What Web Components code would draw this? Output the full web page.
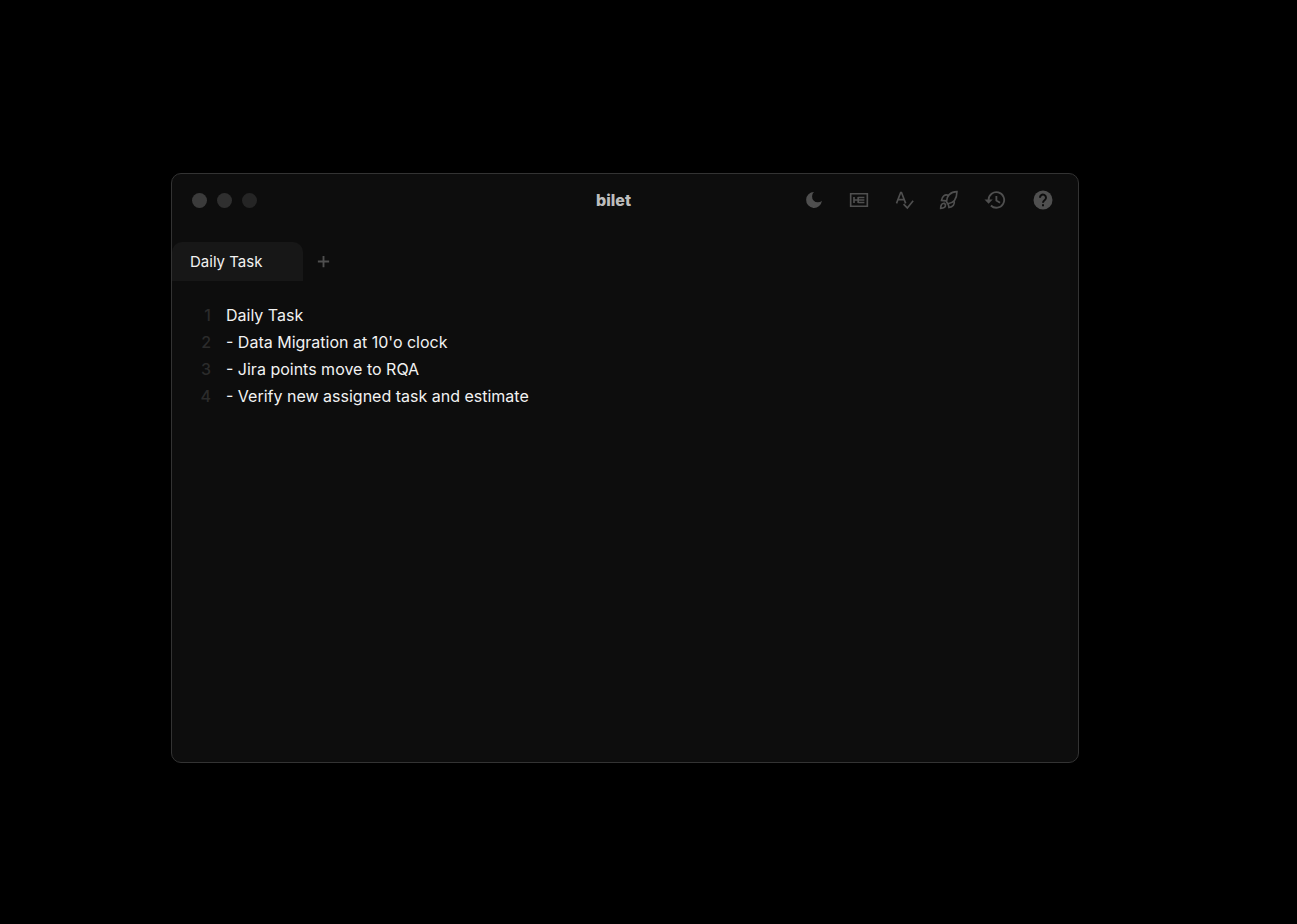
<!DOCTYPE html>
<html lang="en">
<head>
<meta charset="utf-8">
<meta name="viewport" content="width=device-width, initial-scale=1">
<title>bilet</title>
<style>
    body {
        --window: #0d0d0d;
        --line: #333333;
        --tab: #171717;
        --icon: #4f4f4f;
        --number: #2b2b2b;
        --text: #f2f2f2;
        margin: 0px;
        min-height: 100vh;
        box-sizing: border-box;
        padding: 173px 218px 161px 171px;
        display: flex;
        background-color: #000;
        color: var(--text);
        font-family: Inter, "Liberation Sans", sans-serif;
    }
</style>
</head>
<body>
<note-window>
    <title-bar slot="bar">bilet</title-bar>
    <tab-list slot="tabs">Daily Task</tab-list>
    <note-editor slot="editor">Daily Task
- Data Migration at 10'o clock
- Jira points move to RQA
- Verify new assigned task and estimate</note-editor>
</note-window>

<script>
const icons = {
    moon: '<path d="M12 2.500a9.500 9.500 0 1 0 9.500 10.500A6.900 6.900 0 0 1 12 2.500z" fill="currentColor" stroke="none"/>',
    heading: '<path d="M2 4.500h20v15H2z M6 8.500v7 M6 12h5 M11 8.500v7 M11 9h7.500 M11 12h7.500 M11 15h7.500"/>',
    spell: '<path d="M3 16L8 3h1l5 13 M5 11.500h7 M11.500 17l4.500 4.500L23 13"/>',
    rocket: '<path d="M9 14C9 7.500 13.500 2 21.500 2c0 8-4 13.500-11 14.500z M11.500 6.500C7 4.500 3.500 8 3 12.500l6 .500 M18 12.500c1.500 4.500-1.500 8-6 8.500l-1-4.500 M6.500 16c-3-.500-4.500 2-4.500 6c4 0 6-1.500 5.800-4.500z"/>',
    history: '<path d="M5 12a8.500 8.500 0 1 1 2.500 6 M13.500 7.500v5l4 2.500"/><path d="M0.500 11.500h9L5 16z" fill="currentColor" stroke="none"/>',
    help: '<circle cx="12" cy="12" r="9.500" fill="currentColor" stroke="none"/><path d="M9 9.800a3 3 0 1 1 4.800 2.200c-1.200.900-1.800 1.400-1.800 2.800 M12 16.200v2" stroke="#0d0d0d"/>',
    plus: '<path d="M12 3v18 M3 12h18" stroke-width="3"/>'
};

const icon = (name, size) => `<svg width="${size}" height="${size}" viewBox="0 0 24 24" fill="none" stroke="currentColor" stroke-width="2" aria-hidden="true">${icons[name]}</svg>`;

class NoteWindow extends HTMLElement {

    constructor() {
        super();
        this.attachShadow({ mode: 'open' });
    }

    connectedCallback() {
        this.shadowRoot.innerHTML = `
        <style>
            :host {
                flex: 1;
                min-width: 0px;
                box-sizing: border-box;
                display: flex;
                flex-direction: column;
                background-color: var(--window);
                border: 1px solid var(--line);
                border-radius: 10px;
                overflow: hidden;
            }
        </style>
        <slot name="bar"></slot>
        <slot name="tabs"></slot>
        <slot name="editor"></slot>
        `
    }
}

class TitleBar extends HTMLElement {

    constructor() {
        super();
        this.attachShadow({ mode: 'open' });
    }

    connectedCallback() {
        this.shadowRoot.innerHTML = `
        <style>
            :host {
                display: flex;
                align-items: center;
                height: 52px;
                padding: 0px 23px 0px 20px;
            }

            #dots, #tools {
                flex: 1 1 0px;
                display: flex;
                align-items: center;
            }

            #dots {
                gap: 10px;
            }

            #tools {
                justify-content: flex-end;
                gap: 25px;
            }

            button {
                display: flex;
                border: none;
                padding: 0px;
                background: none;
                color: var(--icon);
                cursor: pointer;
            }

            #dots button {
                width: 15px;
                height: 15px;
                border-radius: 50%;
                background-color: #3b3b3b;
            }

            #dots button:nth-child(2) {
                background-color: #2f2f2f;
            }

            #dots button:nth-child(3) {
                background-color: #252525;
            }

            h1 {
                margin: 0px 20px 0px 0px;
                font-size: 16px;
                font-weight: 800;
                color: #bdbdbd;
            }
        </style>
        <div id="dots">
            <button aria-label="Close"></button>
            <button aria-label="Minimize"></button>
            <button aria-label="Maximize"></button>
        </div>
        <h1><slot></slot></h1>
        <div id="tools">
            <button aria-label="Dark mode">${icon('moon', 20)}</button>
            <button aria-label="Markdown">${icon('heading', 20)}</button>
            <button aria-label="Spell check">${icon('spell', 20)}</button>
            <button aria-label="Launch">${icon('rocket', 20)}</button>
            <button aria-label="History">${icon('history', 22)}</button>
            <button aria-label="Help">${icon('help', 24)}</button>
        </div>
        `
    }
}

class TabList extends HTMLElement {

    constructor() {
        super();
        this.attachShadow({ mode: 'open' });
    }

    connectedCallback() {
        this.shadowRoot.innerHTML = `
        <style>
            :host {
                display: flex;
                align-items: center;
                gap: 13px;
                margin-top: 16px;
            }

            button {
                border: none;
                background: none;
                font: inherit;
                color: var(--icon);
                cursor: pointer;
            }

            #tab {
                min-width: 131px;
                height: 39px;
                padding: 0px 18px;
                border-radius: 10px 10px 0px 0px;
                background-color: var(--tab);
                color: var(--text);
                font-size: 15px;
                text-align: left;
            }

            #add {
                display: flex;
                padding: 0px;
            }
        </style>
        <button id="tab"><slot></slot></button>
        <button id="add" aria-label="New tab">${icon('plus', 15)}</button>
        `
    }
}

class NoteEditor extends HTMLElement {

    constructor() {
        super();
        this.attachShadow({ mode: 'open' });
    }

    connectedCallback() {
        this.shadowRoot.innerHTML = `
        <style>
            :host {
                flex: 1;
                display: flex;
                gap: 15px;
                padding: 21px 20px 20px 24px;
                font-size: 16px;
                line-height: 27px;
            }

            #numbers {
                width: 15px;
                text-align: right;
                font-weight: 500;
                color: var(--number);
            }

            textarea {
                flex: 1;
                border: none;
                outline: none;
                padding: 0px;
                resize: none;
                background: none;
                color: inherit;
                font: inherit;
            }
        </style>
        <div id="numbers"></div>
        <textarea aria-label="Note" spellcheck="false"></textarea>
        `
        this.numbers = this.shadowRoot.querySelector('#numbers');
        this.area = this.shadowRoot.querySelector('textarea');
        this.area.value = this.textContent;
        this.area.addEventListener('input', () => this.count());
        this.count();
    }

    count() {
        this.numbers.innerHTML = this.area.value.split('\n').map((line, i) => `<div>${i + 1}</div>`).join('');
    }
}

customElements.define('note-window', NoteWindow);
customElements.define('title-bar', TitleBar);
customElements.define('tab-list', TabList);
customElements.define('note-editor', NoteEditor);
</script>
</body>
</html>
